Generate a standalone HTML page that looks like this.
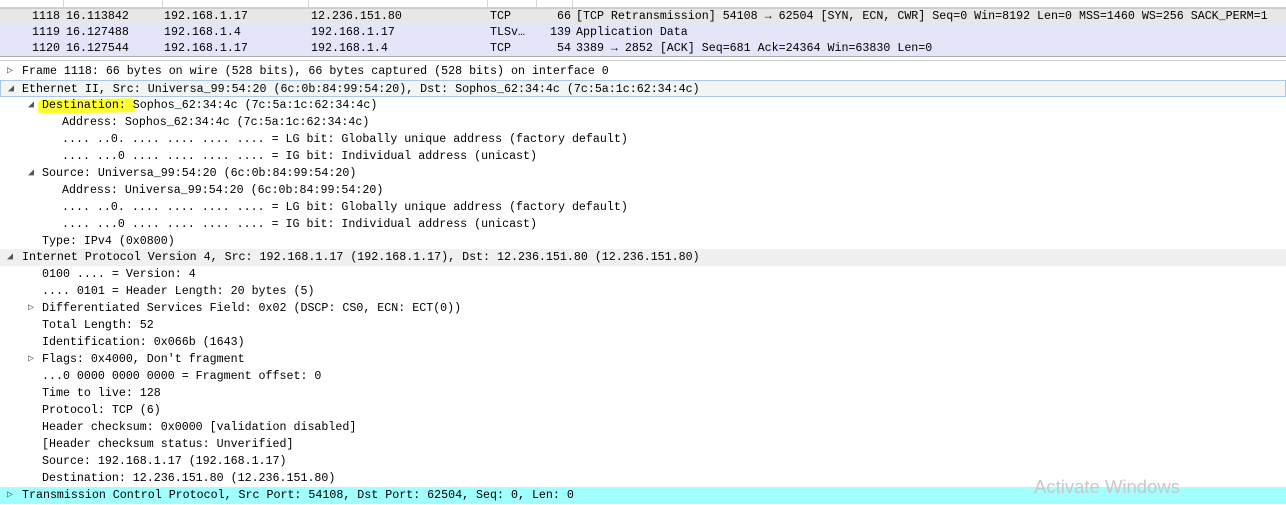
<!DOCTYPE html>
<html><head><style>
body{margin:0;width:1286px;height:505px;overflow:hidden;background:#fff;font-family:"Liberation Mono",monospace;font-size:11.65px;color:#000;position:relative}
.hdr{position:absolute;top:0;left:0;width:1286px;height:7px;background:#fff;border-bottom:1px solid #d0d0d0}
.hdr i{position:absolute;top:0;height:7px;border-left:1px solid #d5d5d5}
.pr{position:absolute;left:0;width:1286px;height:16px;line-height:17px;white-space:pre}
.pr span{position:absolute;top:0}
.dr{position:absolute;left:0;width:1286px;height:17px;line-height:17px;white-space:pre;box-sizing:border-box}
.ar{position:absolute;font-size:10px;color:#555}
</style></head><body>
<div class="hdr"><i style="left:63px"></i><i style="left:162px"></i><i style="left:308px"></i><i style="left:487px"></i><i style="left:536px"></i><i style="left:572px"></i></div>
<div style="position:absolute;left:7px;top:8px;height:48px;border-left:1px dashed #999"></div>
<div class="pr" style="top:8px;background:#e7e7e7;border-top:1px solid #ccc;border-bottom:1px solid #bbb;height:15px;line-height:15px"><span style="left:32px">1118</span><span style="left:66px">16.113842</span><span style="left:164px">192.168.1.17</span><span style="left:311px">12.236.151.80</span><span style="left:490px">TCP</span><span style="left:557px">66</span><span style="left:576px">[TCP Retransmission] 54108 → 62504 [SYN, ECN, CWR] Seq=0 Win=8192 Len=0 MSS=1460 WS=256 SACK_PERM=1</span></div>
<div class="pr" style="top:24px;background:#e5e5fa"><span style="left:32px">1119</span><span style="left:66px">16.127488</span><span style="left:164px">192.168.1.4</span><span style="left:311px">192.168.1.17</span><span style="left:490px">TLSv…</span><span style="left:550px">139</span><span style="left:576px">Application Data</span></div>
<div class="pr" style="top:40px;background:#e5e5fa;border-bottom:1px solid #aaa"><span style="left:32px">1120</span><span style="left:66px">16.127544</span><span style="left:164px">192.168.1.17</span><span style="left:311px">192.168.1.4</span><span style="left:490px">TCP</span><span style="left:557px">54</span><span style="left:576px">3389 → 2852 [ACK] Seq=681 Ack=24364 Win=63830 Len=0</span></div>
<div style="position:absolute;top:60px;left:0;width:1286px;border-top:1px solid #ccc"></div>
<div style="position:absolute;left:38px;top:99px;width:98px;height:14px;background:#ffff33;border-radius:3px;transform:skewY(-1deg)"></div>
<div class="dr" style="top:63px"><span class="ar" style="left:7px">▷</span><span style="position:absolute;left:22px">Frame 1118: 66 bytes on wire (528 bits), 66 bytes captured (528 bits) on interface 0</span></div>
<div class="dr" style="top:80px;border:1px solid #a9c8ea;background:#f4f4f4"><span class="ar" style="left:7px">◢</span><span style="position:absolute;left:21px">Ethernet II, Src: Universa_99:54:20 (6c:0b:84:99:54:20), Dst: Sophos_62:34:4c (7c:5a:1c:62:34:4c)</span></div>
<div class="dr" style="top:97px"><span class="ar" style="left:28px">◢</span><span style="position:absolute;left:42px">Destination: Sophos_62:34:4c (7c:5a:1c:62:34:4c)</span></div>
<div class="dr" style="top:114px"><span style="position:absolute;left:62px">Address: Sophos_62:34:4c (7c:5a:1c:62:34:4c)</span></div>
<div class="dr" style="top:131px"><span style="position:absolute;left:62px">.... ..0. .... .... .... .... = LG bit: Globally unique address (factory default)</span></div>
<div class="dr" style="top:148px"><span style="position:absolute;left:62px">.... ...0 .... .... .... .... = IG bit: Individual address (unicast)</span></div>
<div class="dr" style="top:165px"><span class="ar" style="left:28px">◢</span><span style="position:absolute;left:42px">Source: Universa_99:54:20 (6c:0b:84:99:54:20)</span></div>
<div class="dr" style="top:182px"><span style="position:absolute;left:62px">Address: Universa_99:54:20 (6c:0b:84:99:54:20)</span></div>
<div class="dr" style="top:199px"><span style="position:absolute;left:62px">.... ..0. .... .... .... .... = LG bit: Globally unique address (factory default)</span></div>
<div class="dr" style="top:216px"><span style="position:absolute;left:62px">.... ...0 .... .... .... .... = IG bit: Individual address (unicast)</span></div>
<div class="dr" style="top:233px"><span style="position:absolute;left:42px">Type: IPv4 (0x0800)</span></div>
<div class="dr" style="top:249px;background:#f0f0f0"><span class="ar" style="left:7px">◢</span><span style="position:absolute;left:22px">Internet Protocol Version 4, Src: 192.168.1.17 (192.168.1.17), Dst: 12.236.151.80 (12.236.151.80)</span></div>
<div class="dr" style="top:266px"><span style="position:absolute;left:42px">0100 .... = Version: 4</span></div>
<div class="dr" style="top:283px"><span style="position:absolute;left:42px">.... 0101 = Header Length: 20 bytes (5)</span></div>
<div class="dr" style="top:300px"><span class="ar" style="left:28px">▷</span><span style="position:absolute;left:42px">Differentiated Services Field: 0x02 (DSCP: CS0, ECN: ECT(0))</span></div>
<div class="dr" style="top:317px"><span style="position:absolute;left:42px">Total Length: 52</span></div>
<div class="dr" style="top:334px"><span style="position:absolute;left:42px">Identification: 0x066b (1643)</span></div>
<div class="dr" style="top:351px"><span class="ar" style="left:28px">▷</span><span style="position:absolute;left:42px">Flags: 0x4000, Don't fragment</span></div>
<div class="dr" style="top:368px"><span style="position:absolute;left:42px">...0 0000 0000 0000 = Fragment offset: 0</span></div>
<div class="dr" style="top:385px"><span style="position:absolute;left:42px">Time to live: 128</span></div>
<div class="dr" style="top:402px"><span style="position:absolute;left:42px">Protocol: TCP (6)</span></div>
<div class="dr" style="top:419px"><span style="position:absolute;left:42px">Header checksum: 0x0000 [validation disabled]</span></div>
<div class="dr" style="top:436px"><span style="position:absolute;left:42px">[Header checksum status: Unverified]</span></div>
<div class="dr" style="top:453px"><span style="position:absolute;left:42px">Source: 192.168.1.17 (192.168.1.17)</span></div>
<div class="dr" style="top:470px"><span style="position:absolute;left:42px">Destination: 12.236.151.80 (12.236.151.80)</span></div>
<div class="dr" style="top:487px;background:#a0ffff"><span class="ar" style="left:7px">▷</span><span style="position:absolute;left:22px">Transmission Control Protocol, Src Port: 54108, Dst Port: 62504, Seq: 0, Len: 0</span></div>
<div style="position:absolute;left:1034px;top:476px;font-family:'Liberation Sans',sans-serif;font-size:18.5px;color:#c8c8c8">Activate Windows</div>
</body></html>
